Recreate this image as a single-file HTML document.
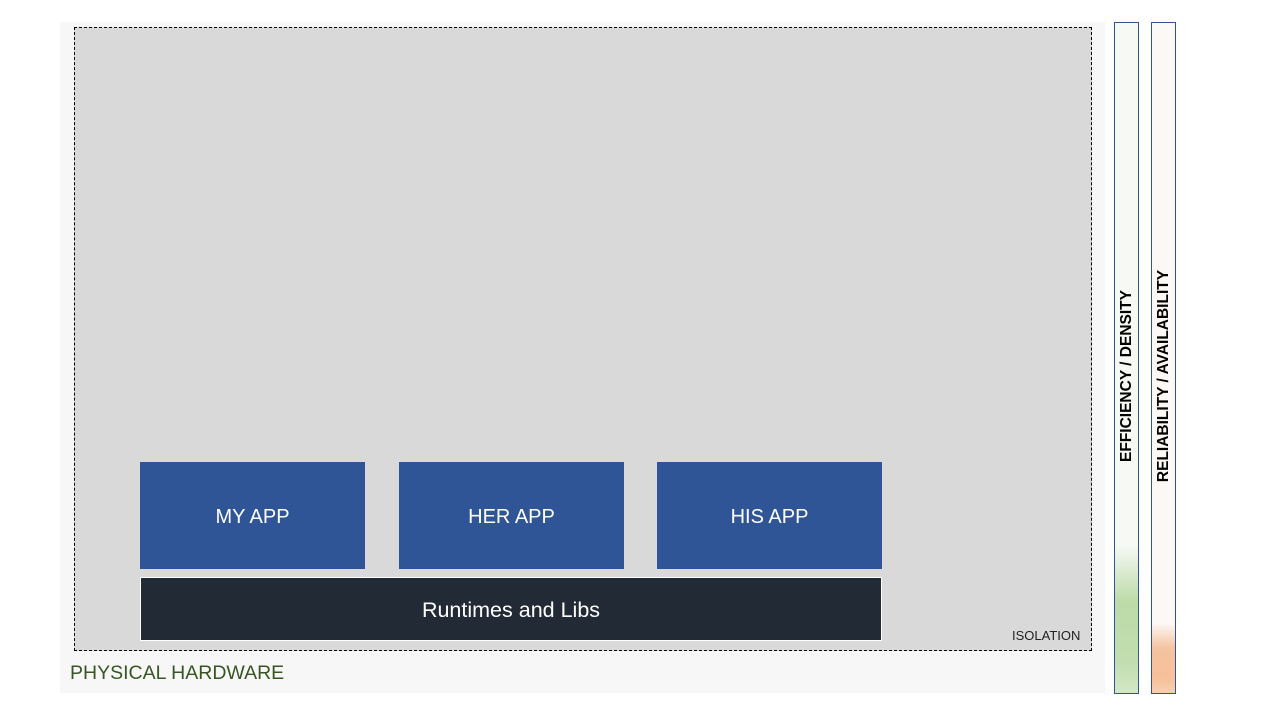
<!DOCTYPE html>
<html><head><style>
body{margin:0;width:1280px;height:720px;background:#fff;position:relative;overflow:hidden;font-family:"Liberation Sans",Calibri,sans-serif}
div{position:absolute;box-sizing:border-box}
.app{background:#2f5597;color:#fff;font-size:20px;display:flex;align-items:center;justify-content:center;width:225px;height:107px;top:462px;padding-top:3px}
.bar{top:22px;height:672px;border:1px solid #2f5597;width:25px}
.vt{position:absolute;left:50%;top:353px;transform:translate(-50%,-50%) rotate(-90deg);white-space:nowrap;font-weight:bold;font-size:15.5px;color:#000}
</style></head><body>
<div style="left:60px;top:22px;width:1045px;height:671px;background:#f7f7f7"></div>
<div style="left:74px;top:27px;width:1018px;height:624px;background:#d9d9d9;border:1px dashed #000"></div>
<div class="app" style="left:140px">MY APP</div>
<div class="app" style="left:399px">HER APP</div>
<div class="app" style="left:657px">HIS APP</div>
<div style="left:140px;top:577px;width:742px;height:64px;background:#222a35;color:#fff;font-size:21.5px;display:flex;align-items:center;justify-content:center;border:1px solid #fff;padding-top:2px">Runtimes and Libs</div>
<div style="left:1012px;top:628px;font-size:13px;color:#222">ISOLATION</div>
<div style="left:70px;top:662px;font-size:19.5px;color:#375623">PHYSICAL HARDWARE</div>
<div class="bar" style="left:1114px;background:linear-gradient(#f6f9f4 0,#f6f9f4 522px,#bcdba8 580px,#c2deb0 640px,#d4e8c7 672px)"><span class="vt">EFFICIENCY / DENSITY</span></div>
<div class="bar" style="left:1151px;background:linear-gradient(#fcf8f6 0,#fcf8f6 600px,#f5c3a0 625px,#f6c09a 655px,#f8d0b4 672px)"><span class="vt">RELIABILITY / AVAILABILITY</span></div>
</body></html>
